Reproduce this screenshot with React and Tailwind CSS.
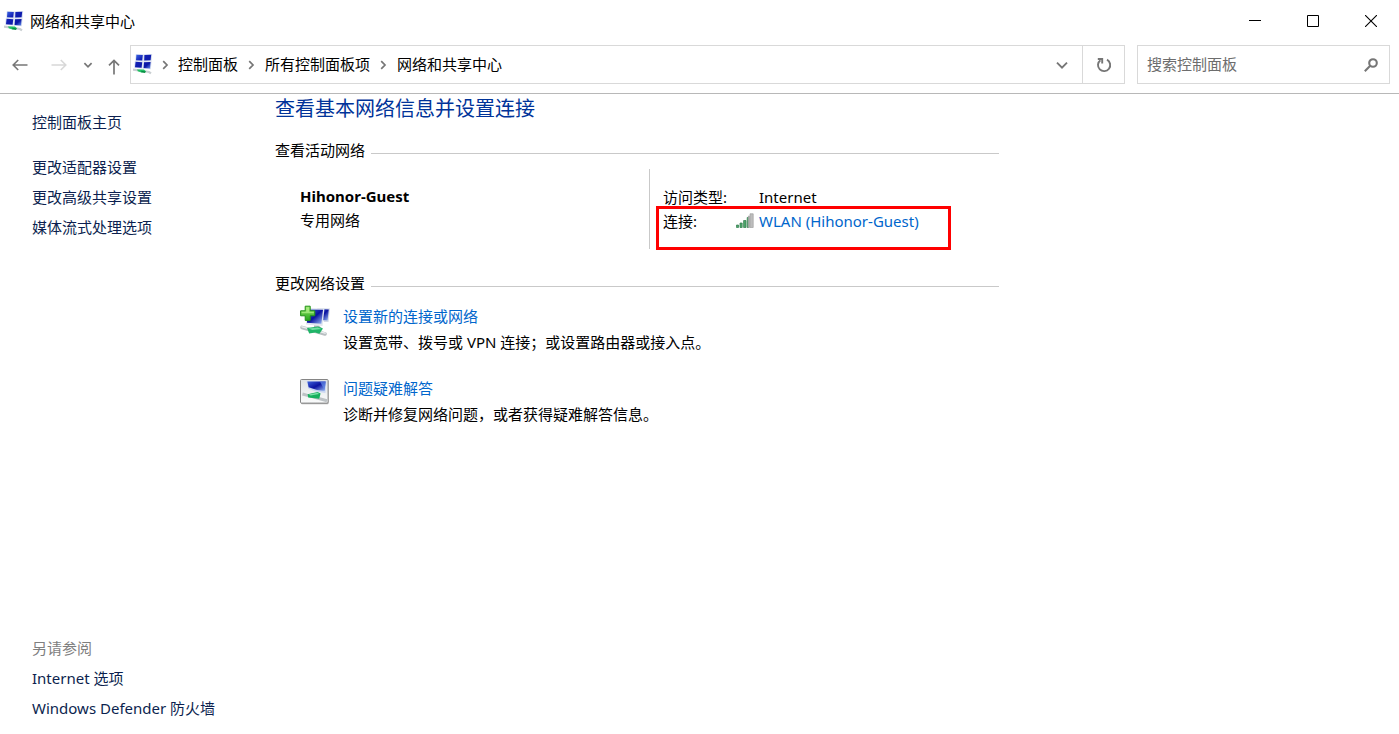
import React from "react";

const sideLinks = ["更改适配器设置", "更改高级共享设置", "媒体流式处理选项"];
const seeAlso = ["Internet 选项", "Windows Defender 防火墙"];
const crumbs = ["控制面板", "所有控制面板项", "网络和共享中心"];

const NetworkIcon = () => (
    <svg viewBox="0 0 20 21" className="w-5 h-[21px] shrink-0" aria-hidden="true">
        <defs>
            <linearGradient id="screen" x1="0" y1="0" x2="1" y2="1">
                <stop offset="0" stopColor="#3f6be8" />
                <stop offset="0.35" stopColor="#1220b4" />
                <stop offset="0.75" stopColor="#0b17a6" />
                <stop offset="1" stopColor="#6f9af0" />
            </linearGradient>
        </defs>
        <path d="M2.8 0.2 10.6.4 10.2 7.2 2.2 6.8Z M10.8.4 19.2 0 18.6 6.8 10.4 7.2Z M1.8 7.2 10 7.6 9.4 14.6 1.2 13.8Z M10.4 7.6 18.6 7.2 17.8 15.2 9.8 14.8Z" fill="#d3dcef" />
        <path d="M3.4.8 9.8 1 9.2 6.4 3 6.2Z M11.4 1 18.2.8 17.6 6.2 11.2 6.4Z M2.6 7.8 9.2 8.2 8.6 13.8 2 13.2Z M11 8.2 17.6 8 17 14.4 10.6 14Z" fill="url(#screen)" />
        <path d="M0 15.6 6 16.4 16 18 18 19.4" stroke="#c9cfd2" strokeWidth="2.2" fill="none" />
        <path d="M4 15.4 11 15.4 13.2 17.8 8.4 18.6 4.8 17.2Z" fill="#22c065" />
        <path d="m8.4 16.8 4.4.6-.8 1.6-3.8-.8Z" fill="#078c42" />
    </svg>
);

const NewConnectionIcon = () => (
    <svg viewBox="0 0 31 32" className="w-[31px] h-8" aria-hidden="true">
        <defs>
            <linearGradient id="monitor" x1="0" y1="0" x2="1" y2="1">
                <stop offset="0" stopColor="#3f63db" />
                <stop offset="0.5" stopColor="#0b13a0" />
                <stop offset="1" stopColor="#9fc0f6" />
            </linearGradient>
            <linearGradient id="plus" x1="0" y1="0" x2="0" y2="1">
                <stop offset="0" stopColor="#8fe463" />
                <stop offset="1" stopColor="#27a51d" />
            </linearGradient>
        </defs>
        <path d="M17 3 30 3.5 28.5 17 24 17Z" fill="#d4dae6" />
        <path d="M18 4 28.8 4.4 27.6 15.4 22 15Z" fill="url(#monitor)" />
        <path d="M6 3 24.5 3.5 22.5 21 6 19.5Z" fill="#e1e6ef" />
        <path d="M7 4.4 23 4.8 21.4 18.8 7 17.8Z" fill="url(#monitor)" />
        <path d="m14 20.4 5 .4 3 2.4-8-.6Z" fill="#aeb4bb" />
        <path d="M2 22.4 25 29" stroke="#b9bfc2" strokeWidth="3.6" strokeLinecap="round" />
        <path d="M2 21.8 25 28.2" stroke="#eceff0" strokeWidth="1.4" strokeLinecap="round" />
        <path d="m7 23 11-1.6 5 2.2-3.6 5.2-4.2-1.4-6 1Z" fill="#20b568" />
        <path d="m8.4 23.4 9.4-1 3.6 1.6-9 1Z" fill="#74dfa3" />
        <path d="M5.2 1.2h5v4.6h4.6v5h-4.6v4.6h-5v-4.6H.6v-5h4.6Z" fill="url(#plus)" stroke="#239019" />
        <path d="M6.2 2.2h3v4.6h4.6v1.4H1.6V6.8h4.6Z" fill="#b7f28e" fillOpacity="0.7" />
    </svg>
);

const TroubleshootIcon = () => (
    <svg viewBox="0 0 30 28" className="w-[30px] h-7" aria-hidden="true">
        <defs>
            <linearGradient id="panel" x1="0" y1="0" x2="0" y2="1">
                <stop offset="0" stopColor="#dfe2e5" />
                <stop offset="1" stopColor="#fafbfb" />
            </linearGradient>
        </defs>
        <g transform="translate(0 2)">
            <rect x="1" y="1.2" width="27.6" height="24" rx="1" fill="#b4b4b4" />
            <rect x="0.5" y="0.5" width="27.6" height="23.6" rx="1" fill="url(#panel)" stroke="#858585" />
            <path d="M6.6 2.2 26.4 2.2 25.4 14 16 12.4 8.4 9.8Z" fill="#c9d6f1" />
            <path d="M7.4 2.4 25.6 2.4 24.6 12 17 11 8.6 8.2Z" fill="url(#monitor)" />
            <path d="m20 2.4 5.6 0-.9 9Z" fill="#668ee9" fillOpacity="0.7" />
            <path d="m2.4 15 6 1.6L27 21.8" stroke="#bdc2c5" strokeWidth="3" fill="none" />
            <path d="m7.6 15.2 10-2.2 3 1.6-1.4 5.2-11-1.2Z" fill="#17b05e" />
            <path d="m8.6 15.4 9-1.6 1.4 1.2-8.4 1.6Z" fill="#7be0a8" />
        </g>
    </svg>
);

const SignalIcon = () => (
    <svg viewBox="0 0 18 16" className="w-[18px] h-4 shrink-0" aria-hidden="true">
        <path d="M.5 12h2v2.5h-2z M4 10h2.2v4.5H4z M7.6 7.5H10v7H7.6z M11.2 4.5h1.6v10h-1.6z" fill="#4fa56c" stroke="#2f7c4a" strokeWidth="0.7" />
        <path d="M14 .8h3.2v13.7H14z M12.4 3h1v11.5h-1z" fill="#bdbdbd" stroke="#a0a0a0" strokeWidth="0.7" />
    </svg>
);

const Chevron = ({ className, d }) => (
    <span className={`flex justify-center shrink-0 ${className}`}>
        <svg viewBox="0 0 10 10" className="w-[10px] h-[10px]" fill="none" stroke="#767676" strokeWidth="1.7" aria-hidden="true">
            <path d={d} />
        </svg>
    </span>
);

const SectionTitle = ({ children }) => (
    <div className="flex items-center gap-1.5 leading-[22px]">
        <h2>{children}</h2>
        <div className="flex-1 border-t border-[#c9c9c9] mt-1.5"></div>
    </div>
);

const Task = ({ icon, title, text }) => (
    <div className="flex pl-[25px] leading-[26px]">
        <div className="w-[43px] shrink-0 pt-0.5">{icon}</div>
        <div>
            <a href="#" className="text-[#0066cc]">{title}</a>
            <p>{text}</p>
        </div>
    </div>
);

const TitleBar = () => (
    <header className="flex items-center h-[42px] pl-1">
        <NetworkIcon />
        <h1 className="flex-1 pl-1.5">网络和共享中心</h1>
        <div className="flex h-full">
            <button aria-label="最小化" className="w-14 flex items-center justify-center">
                <svg viewBox="0 0 12 12" className="w-3 h-3" stroke="#000"><path d="M0 5.5h12" /></svg>
            </button>
            <button aria-label="最大化" className="w-[60px] flex items-center justify-center">
                <svg viewBox="0 0 12 12" className="w-3 h-3" fill="none" stroke="#000"><path d="M.5.5h11v11H.5z" /></svg>
            </button>
            <button aria-label="关闭" className="w-14 flex items-center justify-center">
                <svg viewBox="0 0 12 12" className="w-3 h-3" stroke="#000" strokeWidth="1.1"><path d="m0 0 12 12M12 0 0 12" /></svg>
            </button>
        </div>
    </header>
);

const NavBar = () => (
    <nav className="flex items-center pt-[3px] pb-[9px] pr-[9px] border-b border-[#b8b8b8]">
        <button aria-label="后退" className="w-10 flex justify-center">
            <svg viewBox="0 0 16 12" className="w-4 h-3" fill="none" stroke="#777" strokeWidth="1.6"><path d="M15.5 6H1.4M6.2 1 1.2 6l5 5" /></svg>
        </button>
        <button aria-label="前进" className="w-[38px] flex justify-center">
            <svg viewBox="0 0 16 12" className="w-4 h-3" fill="none" stroke="#d8d8d8" strokeWidth="1.6"><path d="M.5 6h14.1M9.8 1l5 5-5 5" /></svg>
        </button>
        <button aria-label="最近浏览的位置" className="w-5">
            <Chevron className="" d="M1.4 3.2 5 6.8l3.6-3.6" />
        </button>
        <button aria-label="上移" className="w-8 flex justify-center pt-1">
            <svg viewBox="0 0 12 16" className="w-3 h-4" fill="none" stroke="#777" strokeWidth="1.7"><path d="M6 15.5V1.4M1 6.4l5-5 5 5" /></svg>
        </button>
        <div className="flex flex-1 h-[39px] border border-[#d9d9d9]">
            <div className="flex flex-1 items-center pl-0.5">
                <NetworkIcon />
                {crumbs.map((crumb, i) => (
                    <React.Fragment key={crumb}>
                        <Chevron className={i === 0 ? "w-[25px] pr-0.5" : "w-[27px] pr-0.5"} d="M3.2 1.2 7 5 3.2 8.8" />
                        <a href="#">{crumb}</a>
                    </React.Fragment>
                ))}
            </div>
            <button aria-label="以前的位置" className="w-10 flex items-center justify-center">
                <svg viewBox="0 0 12 12" className="w-3 h-3" fill="none" stroke="#767676" strokeWidth="1.9"><path d="m1 3.6 5 5 5-5" /></svg>
            </button>
            <button aria-label="刷新" className="w-[42px] flex items-center justify-center border-l border-[#d9d9d9]">
                <svg viewBox="0 0 16 16" className="w-4 h-4" fill="none" stroke="#767676" strokeWidth="1.9">
                    <path d="M11 2.7A6.1 6.1 0 1 1 4.4 3.2" />
                    <path d="M1.8 2h4.4v4.6" />
                </svg>
            </button>
        </div>
        <label className="flex items-center w-[253px] h-[39px] ml-3 pl-[9px] pr-[11px] border border-[#d9d9d9]">
            <input
                type="text"
                aria-label="搜索控制面板"
                placeholder="搜索控制面板"
                className="flex-1 min-w-0 outline-none placeholder:text-[#6d6d6d]"
            />
            <svg viewBox="0 0 14 14" className="w-3.5 h-3.5" fill="none" stroke="#767676" strokeWidth="2.1" aria-hidden="true">
                <circle cx="9" cy="5" r="3.8" />
                <path d="M6.2 7.8.8 13.2" />
            </svg>
        </label>
    </nav>
);

const App = () => {
    return (
        <div className="min-h-screen flex flex-col bg-white text-black text-[15px] font-['Noto_Sans','Noto_Sans_CJK_SC',sans-serif]">
            <TitleBar />
            <NavBar />

            <div className="flex flex-1">
                {/* Sidebar */}
                <aside className="w-[275px] shrink-0 flex flex-col pl-8 pt-[13px] pb-[11px] leading-[30px] text-[#0c1f4f]">
                    <a href="#" className="mb-[15px]">控制面板主页</a>
                    {sideLinks.map((link) => (
                        <a key={link} href="#">{link}</a>
                    ))}
                    <div className="mt-auto text-[#7f7f7f]">另请参阅</div>
                    {seeAlso.map((link) => (
                        <a key={link} href="#">{link}</a>
                    ))}
                </aside>

                <main className="flex-1 max-w-[724px]">
                    <div className="text-xl leading-[30px] text-[#003399] mb-[15px]">查看基本网络信息并设置连接</div>

                    <SectionTitle>查看活动网络</SectionTitle>
                    <div className="flex mt-2 mb-[23px] pl-[25px] leading-6">
                        <div className="flex-1 pt-[15px]">
                            <div className="font-bold">Hihonor-Guest</div>
                            <div>专用网络</div>
                        </div>
                        <div className="w-[350px] h-20 pt-4 pl-[13px] border-l border-[#c9c9c9]">
                            <div className="flex">
                                <span className="w-24">访问类型:</span>
                                <span>Internet</span>
                            </div>
                            <div className="relative flex">
                                <span className="w-[73px]">连接:</span>
                                <a href="#" className="flex items-center gap-[5px] text-[#0066cc]">
                                    <SignalIcon />
                                    WLAN (Hihonor-Guest)
                                </a>
                                {/* Highlight around the active connection */}
                                <div className="absolute -left-[7px] -top-[3px] w-[295px] h-11 border-3 border-[#ff0000] pointer-events-none"></div>
                            </div>
                        </div>
                    </div>

                    <SectionTitle>更改网络设置</SectionTitle>
                    <div className="flex flex-col gap-5 mt-[9px]">
                        <Task
                            icon={<NewConnectionIcon />}
                            title="设置新的连接或网络"
                            text="设置宽带、拨号或 VPN 连接；或设置路由器或接入点。"
                        />
                        <Task
                            icon={<TroubleshootIcon />}
                            title="问题疑难解答"
                            text="诊断并修复网络问题，或者获得疑难解答信息。"
                        />
                    </div>
                </main>
            </div>
        </div>
    );
};

export default App;
